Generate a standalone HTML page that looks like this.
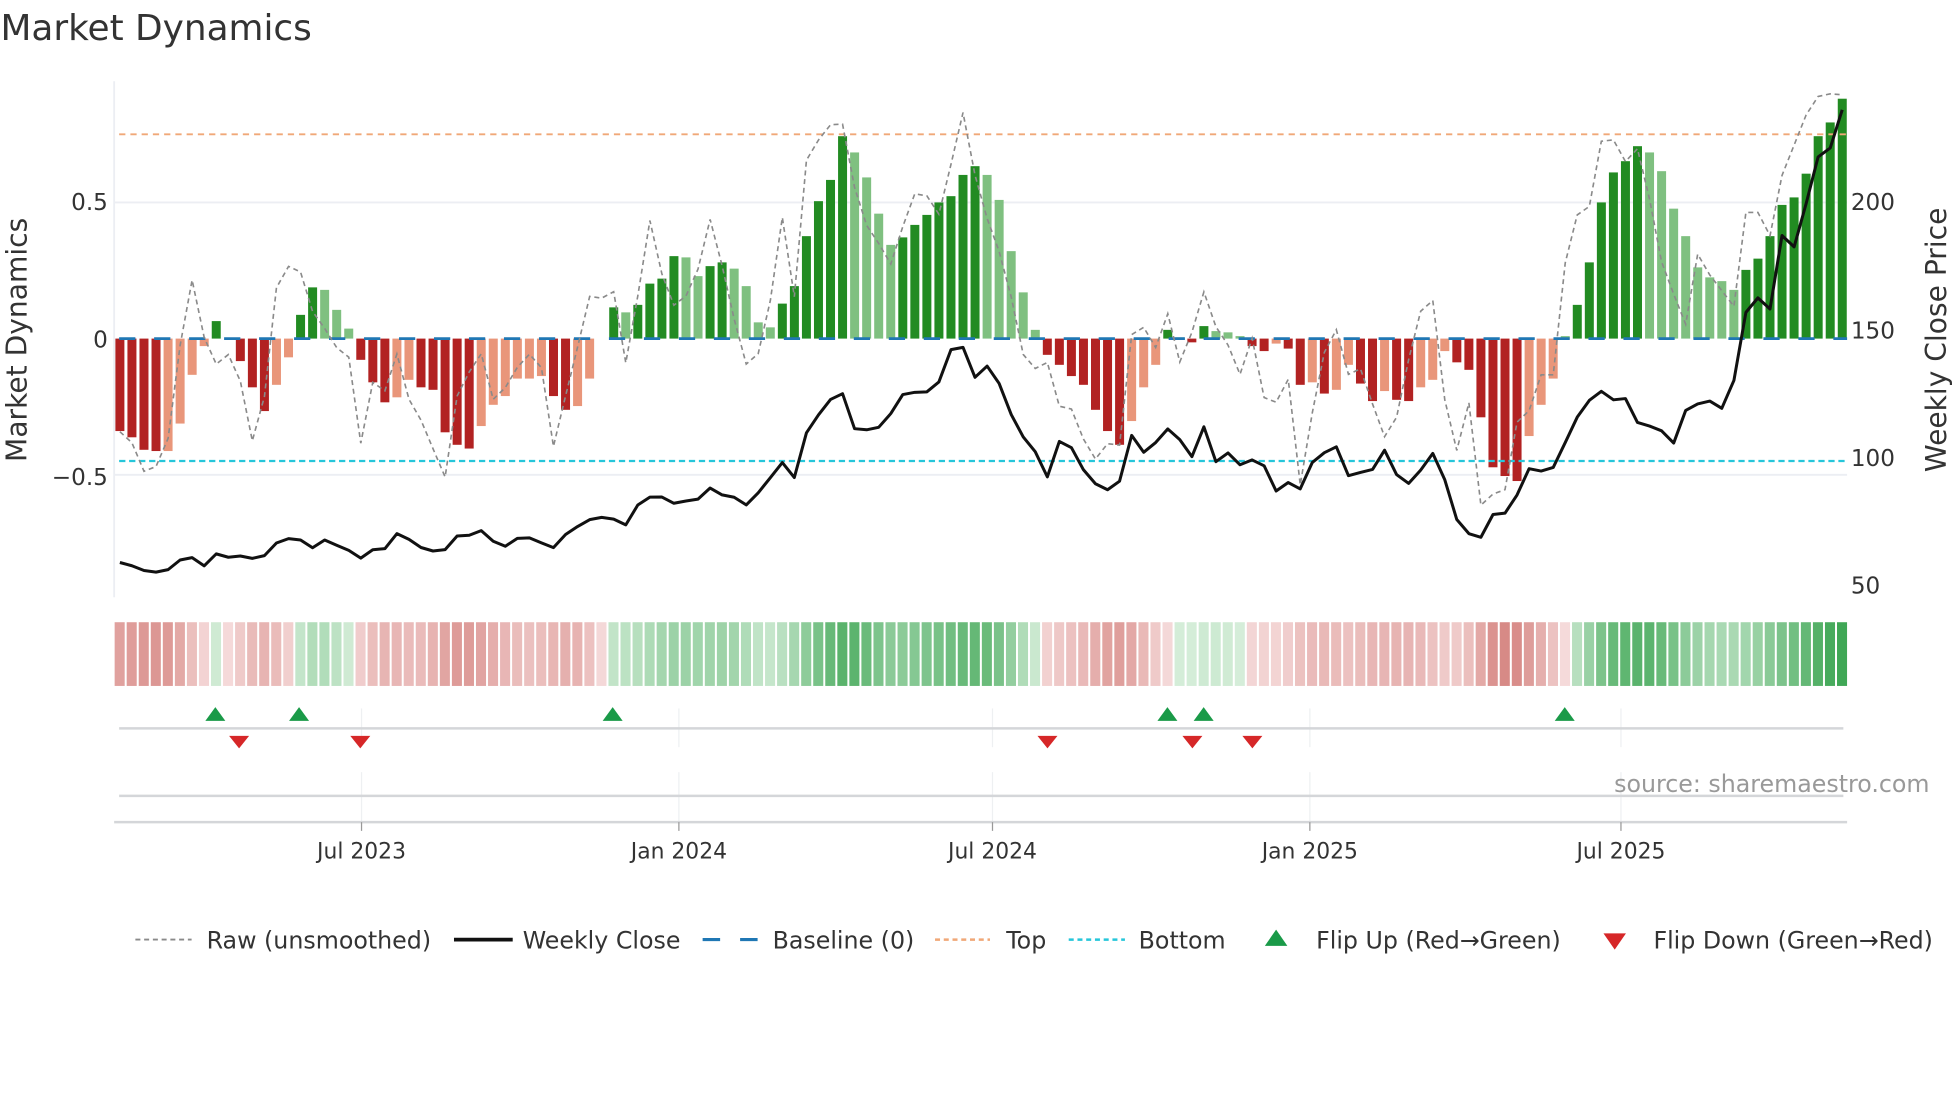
<!DOCTYPE html>
<html><head><meta charset="utf-8">
<style>
html,body{margin:0;padding:0;background:#fff;}
svg{display:block;}
text{font-family:"DejaVu Sans","Liberation Sans",sans-serif;fill:#333;}
</style></head>
<body>
<svg id="s" width="1960" height="1102" viewBox="0 0 1568 882" xmlns="http://www.w3.org/2000/svg">
<rect width="1568" height="882" fill="#fff"/>
<text x="0" y="32" font-size="28.7">Market Dynamics</text>
<line x1="91" y1="65" x2="91" y2="478" stroke="#eceef3" stroke-width="1.5"/>
<line x1="91" y1="162" x2="1478" y2="162" stroke="#eceef3" stroke-width="1.5"/>
<line x1="91" y1="380" x2="1478" y2="380" stroke="#eceef3" stroke-width="1.5"/>
<g id="bars"></g>
<line x1="95" y1="271" x2="1478" y2="271" stroke="#1f77b4" stroke-width="2.2" stroke-dasharray="13,15"/>
<line x1="95" y1="107.5" x2="1478" y2="107.5" stroke="#f0a878" stroke-width="1.5" stroke-dasharray="5,4"/>
<line x1="95" y1="369" x2="1478" y2="369" stroke="#26c6da" stroke-width="1.8" stroke-dasharray="5,3"/>
<polyline id="raw" fill="none" stroke="#8a8a8a" stroke-width="1.3" stroke-dasharray="4,3"/>
<polyline id="price" fill="none" stroke="#111" stroke-width="2.4" stroke-linejoin="round"/>
<g font-size="18.5">
<text x="86" y="168" text-anchor="end">0.5</text>
<text x="86" y="278" text-anchor="end">0</text>
<text x="86" y="388" text-anchor="end">−0.5</text>
<text x="1481" y="168">200</text>
<text x="1481" y="271">150</text>
<text x="1481" y="373">100</text>
<text x="1481" y="475">50</text>
</g>
<text transform="translate(21,272) rotate(-90)" font-size="22.5" text-anchor="middle">Market Dynamics</text>
<text transform="translate(1557,272) rotate(-90)" font-size="22.5" text-anchor="middle">Weekly Close Price</text>
<g id="heat"></g>
<g stroke="#eef0f2" stroke-width="1">
<line x1="289" y1="567" x2="289" y2="598"/><line x1="543" y1="567" x2="543" y2="598"/><line x1="794" y1="567" x2="794" y2="598"/><line x1="1048" y1="567" x2="1048" y2="598"/><line x1="1297" y1="567" x2="1297" y2="598"/>
<line x1="289" y1="618" x2="289" y2="658"/><line x1="543" y1="618" x2="543" y2="658"/><line x1="794" y1="618" x2="794" y2="658"/><line x1="1048" y1="618" x2="1048" y2="658"/><line x1="1297" y1="618" x2="1297" y2="658"/>
</g>
<line x1="95" y1="583" x2="1475" y2="583" stroke="#d4d6d9" stroke-width="2"/>
<line x1="95" y1="637" x2="1475" y2="637" stroke="#d4d6d9" stroke-width="2"/>
<line x1="91" y1="658" x2="1478" y2="658" stroke="#d4d6d9" stroke-width="2"/>
<g stroke="#999" stroke-width="1">
<line x1="289" y1="658" x2="289" y2="665"/><line x1="543" y1="658" x2="543" y2="665"/><line x1="794" y1="658" x2="794" y2="665"/><line x1="1048" y1="658" x2="1048" y2="665"/><line x1="1297" y1="658" x2="1297" y2="665"/>
</g>
<g id="mk"></g>
<text x="1544" y="634" font-size="19" text-anchor="end" style="fill:#999">source: sharemaestro.com</text>
<g font-size="17.5" text-anchor="middle">
<text x="289" y="687">Jul 2023</text><text x="543" y="687">Jan 2024</text><text x="794" y="687">Jul 2024</text><text x="1048" y="687">Jan 2025</text><text x="1297" y="687">Jul 2025</text>
</g>
<line x1="108" y1="752" x2="153" y2="752" stroke="#8a8a8a" stroke-width="1.5" stroke-dasharray="4,3"/>
<line x1="363" y1="752" x2="410" y2="752" stroke="#111" stroke-width="3"/>
<line x1="562" y1="752" x2="606" y2="752" stroke="#1f77b4" stroke-width="2.5" stroke-dasharray="14,16"/>
<line x1="748" y1="752" x2="792" y2="752" stroke="#f0a878" stroke-width="2" stroke-dasharray="4,3"/>
<line x1="855" y1="752" x2="900" y2="752" stroke="#26c6da" stroke-width="2" stroke-dasharray="4,3"/>
<polygon points="1012,757 1030,757 1021,744" fill="#1a9a48"/>
<polygon points="1283,747 1301,747 1292,760" fill="#d62728"/>
<g font-size="19">
<text x="165" y="759">Raw (unsmoothed)</text>
<text x="418" y="759">Weekly Close</text>
<text x="618" y="759">Baseline (0)</text>
<text x="805" y="759">Top</text>
<text x="911" y="759">Bottom</text>
<text x="1053" y="759">Flip Up (Red→Green)</text>
<text x="1323" y="759">Flip Down (Green→Red)</text>
</g>
</svg>
<script>
(function(){
var NS="http://www.w3.org/2000/svg";
var V=[-74,-79,-89,-90,-90,-68,-29,-6,14,0,-18,-39,-58,-37,-15,19,41,39,23,8,-17,-35,-51,-47,-33,-39,-41,-75,-85,-88,-70,-53,-46,-32,-32,-30,-46,-57,-54,-32,0,25,21,27,44,48,66,65,50,58,61,56,42,13,9,28,42,82,110,127,162,149,129,100,75,81,91,99,109,114,131,138,131,111,70,37,7,-13,-21,-30,-37,-57,-74,-85,-66,-39,-21,7,1,-3,10,6,5,2,-6,-10,-4,-8,-37,-35,-44,-41,-21,-36,-50,-42,-49,-50,-39,-33,-10,-19,-25,-67,-110,-117,-121,-83,-56,-34,2,29,65,116,142,151,164,159,143,111,87,61,52,49,42,59,68,87,114,120,140,172,184,204];
for(var j=113;j<V.length;j++) V[j]=Math.round(V[j]*0.94);
var light={4:1,5:1,6:1,7:1,13:1,14:1,17:1,18:1,19:1,23:1,24:1,30:1,31:1,32:1,33:1,34:1,35:1,38:1,39:1,42:1,47:1,48:1,51:1,52:1,53:1,54:1,61:1,62:1,63:1,64:1,72:1,73:1,74:1,75:1,76:1,84:1,85:1,86:1,88:1,91:1,92:1,93:1,96:1,99:1,101:1,102:1,105:1,108:1,109:1,110:1,117:1,118:1,119:1,120:1,127:1,128:1,129:1,130:1,131:1,132:1,133:1,134:1};
var n=V.length, x0=92, p=9.64, w=7.2;
var bars=document.getElementById('bars'), heat=document.getElementById('heat');
function mix(a,b,t){return 'rgb('+a.map(function(v,i){return Math.round(v+(b[i]-v)*t)}).join(',')+')';}
for(var i=0;i<n;i++){
 var v=V[i], x=x0+i*p;
 if(v!==0){
  var r=document.createElementNS(NS,'rect');
  r.setAttribute('x',x.toFixed(2)); r.setAttribute('width',w);
  if(v>0){r.setAttribute('y',271-v);r.setAttribute('height',v);}
  else{r.setAttribute('y',271);r.setAttribute('height',-v);}
  var c = v>0 ? (light[i]?'#7fc080':'#228b22') : (light[i]?'#e9967a':'#b22222');
  r.setAttribute('fill',c); bars.appendChild(r);
 }
 var a=V[Math.max(0,i-1)], b=V[Math.min(n-1,i+1)];
 var s=(a+2*v+b)/4; if(s===0) s=v||a||1;
 var col;
 if(s<0){var t=Math.min(1,-s/115); col=mix([245,218,218],[214,134,130],Math.pow(t,0.9));}
 else {var t=Math.min(1,s/190); col=mix([214,238,218],[62,166,84],Math.pow(t,0.85));}
 var h=document.createElementNS(NS,'rect');
 h.setAttribute('x',(x-0.6).toFixed(2)); h.setAttribute('width',(p-1.6).toFixed(2));
 h.setAttribute('y',498); h.setAttribute('height',51); h.setAttribute('fill',col);
 heat.appendChild(h);
}
function interp(pts){
 var out=[];
 for(var i=0;i<n;i++){
  var x=x0+w/2+i*p, y=pts[0][1];
  for(var k=0;k<pts.length-1;k++){
   if(x>=pts[k][0]&&x<=pts[k+1][0]){var t=(x-pts[k][0])/(pts[k+1][0]-pts[k][0]);y=pts[k][1]+t*(pts[k+1][1]-pts[k][1]);break;}
   if(x>pts[pts.length-1][0]) y=pts[pts.length-1][1];
  }
  out.push(x.toFixed(1)+','+y.toFixed(1));
 }
 return out.join(' ');
}
var P=[[95,450],[106,453],[116,457],[125,458],[134,456],[144,448],[153,446],[163,453],[173,443],[182,446],[192,445],[201,447],[211,445],[220,435],[230,431],[240,432],[249,439],[259,432],[268,436],[278,440],[288,447],[297,440],[307,440],[317,427],[326,431],[336,438],[345,441],[355,441],[365,429],[374,429],[384,424],[394,433],[403,438],[413,431],[422,430],[432,434],[442,439],[452,428],[461,422],[471,416],[480,414],[490,415],[500,421],[509,405],[519,398],[528,397],[538,403],[548,401],[557,401],[567,390],[577,396],[586,397],[596,405],[606,395],[615,384],[625,369],[635,384],[644,348],[654,333],[664,320],[673,312],[683,343],[693,344],[702,343],[712,332],[721,316],[731,314],[741,314],[751,306],[760,280],[770,277],[780,302],[789,292],[799,306],[808,330],[818,349],[828,361],[838,382],[847,353],[857,358],[866,375],[876,387],[886,392],[895,388],[905,348],[915,362],[924,355],[934,343],[944,352],[953,367],[963,341],[973,370],[982,362],[992,372],[1002,368],[1011,372],[1021,393],[1031,386],[1040,392],[1050,370],[1060,362],[1069,357],[1079,381],[1089,378],[1098,376],[1108,360],[1118,381],[1127,387],[1137,376],[1147,362],[1156,384],[1166,417],[1175,427],[1185,430],[1195,411],[1204,411],[1214,396],[1223,375],[1233,377],[1243,374],[1252,355],[1262,334],[1272,320],[1281,313],[1291,320],[1301,319],[1310,338],[1320,341],[1330,345],[1339,355],[1349,328],[1359,323],[1368,321],[1378,327],[1388,303],[1397,250],[1407,238],[1417,248],[1426,188],[1436,198],[1446,160],[1455,125],[1465,118],[1475,85]];
var R=[[95,345],[106,355],[116,380],[125,373],[134,352],[144,275],[153,222],[163,270],[173,292],[182,283],[192,305],[201,355],[211,320],[220,232],[230,213],[240,217],[249,248],[259,262],[268,278],[278,280],[288,357],[297,305],[307,315],[317,282],[326,318],[336,335],[345,355],[355,388],[365,318],[374,300],[384,280],[394,320],[403,312],[413,295],[422,283],[432,287],[442,360],[452,318],[461,282],[471,237],[480,240],[490,228],[500,293],[509,245],[519,173],[528,215],[538,245],[548,238],[557,222],[567,172],[577,210],[586,250],[596,292],[606,285],[615,250],[625,168],[635,243],[644,130],[654,113],[664,100],[673,94],[683,148],[693,180],[702,193],[712,213],[721,185],[731,155],[741,156],[751,172],[760,135],[770,88],[780,140],[789,173],[799,200],[808,233],[818,283],[828,295],[838,290],[847,325],[857,327],[866,350],[876,368],[886,355],[895,363],[905,268],[915,262],[924,280],[934,250],[944,290],[953,268],[963,233],[973,262],[982,275],[992,300],[1002,270],[1011,318],[1021,322],[1031,303],[1040,390],[1050,330],[1060,280],[1069,263],[1079,300],[1089,295],[1098,323],[1108,350],[1118,333],[1127,288],[1137,248],[1147,240],[1156,320],[1166,362],[1175,320],[1185,405],[1195,395],[1204,393],[1214,337],[1223,330],[1233,300],[1243,300],[1252,212],[1262,172],[1272,165],[1281,113],[1291,112],[1301,130],[1310,118],[1320,160],[1330,212],[1339,235],[1349,260],[1359,200],[1368,220],[1378,233],[1388,246],[1397,170],[1407,170],[1417,190],[1426,140],[1436,115],[1446,90],[1455,77],[1465,75],[1475,76]];
document.getElementById('price').setAttribute('points',interp(P));
document.getElementById('raw').setAttribute('points',interp(R));
var mk=document.getElementById('mk');
[172,239,490,934,963,1252].forEach(function(x){
 var t=document.createElementNS(NS,'polygon');
 t.setAttribute('points',(x-8)+',577 '+(x+8)+',577 '+x+',566');t.setAttribute('fill','#1a9a48');mk.appendChild(t);});
[191,288,838,954,1002].forEach(function(x){
 var t=document.createElementNS(NS,'polygon');
 t.setAttribute('points',(x-8)+',589 '+(x+8)+',589 '+x+',599');t.setAttribute('fill','#d62728');mk.appendChild(t);});
})();
</script>
</body></html>
